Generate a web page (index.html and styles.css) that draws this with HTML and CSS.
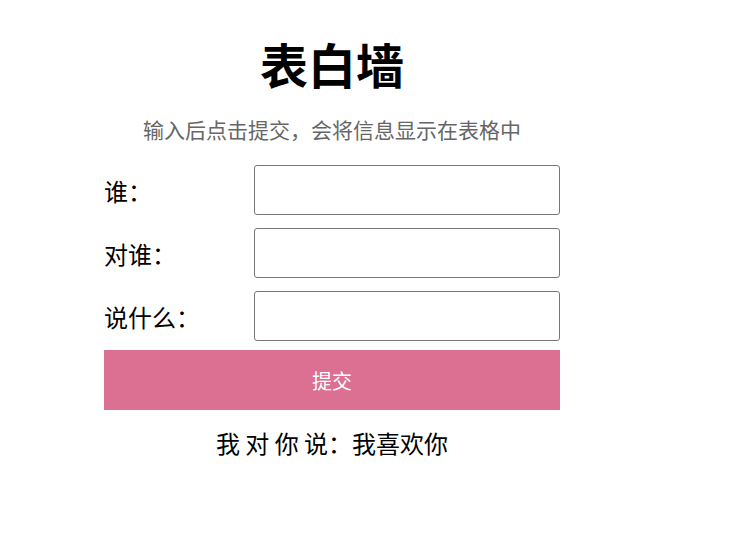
FILE: index.html
```html
<!DOCTYPE html>
<html lang="zh-CN">
<head>
    <meta charset="UTF-8">
    <meta name="viewport" content="width=device-width, initial-scale=1.0">
    <title>表白墙</title>
    <link rel="stylesheet" href="styles.css">
</head>
<body>

<div class="container">
    <h1>表白墙</h1>
    <p class="tip">输入后点击提交，会将信息显示在表格中</p>

    <div class="row">
        <span class="label">谁：</span>
        <input type="text" id="from">
    </div>
    <div class="row">
        <span class="label">对谁：</span>
        <input type="text" id="to">
    </div>
    <div class="row">
        <span class="label">说什么：</span>
        <input type="text" id="message">
    </div>
    <button id="submit">提交</button>

    <!-- 提交后的内容显示在这里 -->
    <div class="list">
        <div class="msg">我 对 你 说：我喜欢你</div>
    </div>
</div>

</body>
</html>
```

FILE: styles.css
```css
* {
    margin: 0;
    padding: 0;
    box-sizing: border-box;
}
body {
    font-family: "Noto Sans CJK SC", "Liberation Sans", sans-serif;
    color: black;
}
.container {
    width: 456px;
    margin-left: 104px;
    padding-top: 33px;
}
h1 {
    font-size: 48px;
    line-height: 60px;
    font-weight: bold;
    text-align: center;
}
.tip {
    margin-top: 21px;
    font-size: 21px;
    line-height: 30px;
    color: #666;
    text-align: center;
}
.row {
    display: flex;
    align-items: center;
    height: 50px;
    margin-top: 13px;
}
.row:first-of-type {
    margin-top: 21px;
}
.label {
    width: 150px;
    font-size: 24px;
}
.row input {
    flex: 1;
    height: 50px;
    border: 1px solid #767676;
    border-radius: 3px;
    font-size: 20px;
    padding: 0 8px;
}
#submit {
    display: block;
    width: 100%;
    height: 60px;
    margin-top: 9px;
    border: none;
    background-color: palevioletred;
    color: white;
    font-family: inherit;
    font-size: 20px;
    cursor: pointer;
}
.list {
    margin-top: 18px;
}
.msg {
    font-size: 24px;
    line-height: 30px;
    text-align: center;
}
```
